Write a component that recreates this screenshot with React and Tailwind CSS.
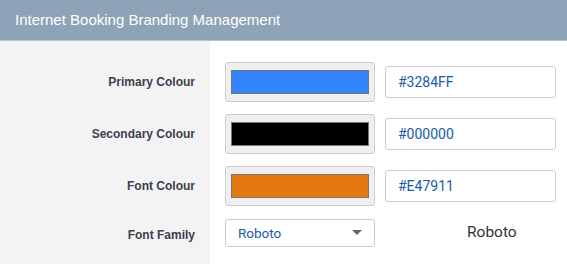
import React, { useState } from 'react';

const rows = [
  { label: 'Primary Colour', value: '#3284FF' },
  { label: 'Secondary Colour', value: '#000000' },
  { label: 'Font Colour', value: '#E47911' },
];

const ColourRow = ({ label, value }) => (
  <div className="flex h-[52px] items-center">
    <div className="w-[210px] self-stretch bg-[#f3f3f3] flex items-center justify-end pr-[15px]">
      <span className="text-[12px] font-bold text-[#3b3f50]">{label}</span>
    </div>
    <div className="flex items-center pl-[15px]">
      <div className="w-[150px] h-[40px] rounded-[3px] border border-[#cfcfcf] bg-[#efefef] flex items-center justify-center">
        <div className="w-[138px] h-[24px] border border-[#777]" style={{ backgroundColor: value }} />
      </div>
      <input
        defaultValue={value}
        className="ml-[10px] w-[171px] h-[32px] rounded-[3px] border border-[#cccccc] bg-white px-[12px] text-[14px] text-[#1a5aa6] outline-none"
        style={{ fontFamily: 'Roboto, sans-serif' }}
      />
    </div>
  </div>
);

export default function App() {
  const [font] = useState('Roboto');
  return (
    <div className="w-[567px] h-[264px] bg-white overflow-hidden" style={{ fontFamily: '"Liberation Sans", Arial, sans-serif' }}>
      <div className="h-[41px] bg-[#8fa3b8] border-b border-[#b8c3cf] flex items-center px-[15px]">
        <h1 className="text-[15px] text-white">Internet Booking Branding Management</h1>
      </div>
      <div className="flex flex-col">
        <div className="h-[15px] flex">
          <div className="w-[210px] bg-[#f3f3f3]" />
        </div>
        {rows.map((r) => (
          <ColourRow key={r.label} {...r} />
        ))}
        <div className="flex h-[53px] items-start">
          <div className="w-[210px] self-stretch bg-[#f3f3f3] flex items-start justify-end pr-[15px] pt-[14px]">
            <span className="text-[12px] font-bold text-[#3b3f50]">Font Family</span>
          </div>
          <div className="flex items-start pl-[15px] pt-[7px]">
            <div className="w-[150px] h-[28px] rounded-[3px] border border-[#cccccc] bg-white flex items-center justify-between pl-[12px] pr-[12px]">
              <span className="text-[13.5px] text-[#1a5aa6]" style={{ fontFamily: 'Roboto, sans-serif' }}>{font}</span>
              <svg width="10" height="6" viewBox="0 0 10 6"><path d="M0 0h10L5 5z" fill="#666" /></svg>
            </div>
            <div className="w-[181px] h-[28px] flex items-center pl-[92px]">
              <span className="text-[15.5px] text-[#333]" style={{ fontFamily: 'Roboto, sans-serif' }}>{font}</span>
            </div>
          </div>
        </div>
      </div>
    </div>
  );
}
